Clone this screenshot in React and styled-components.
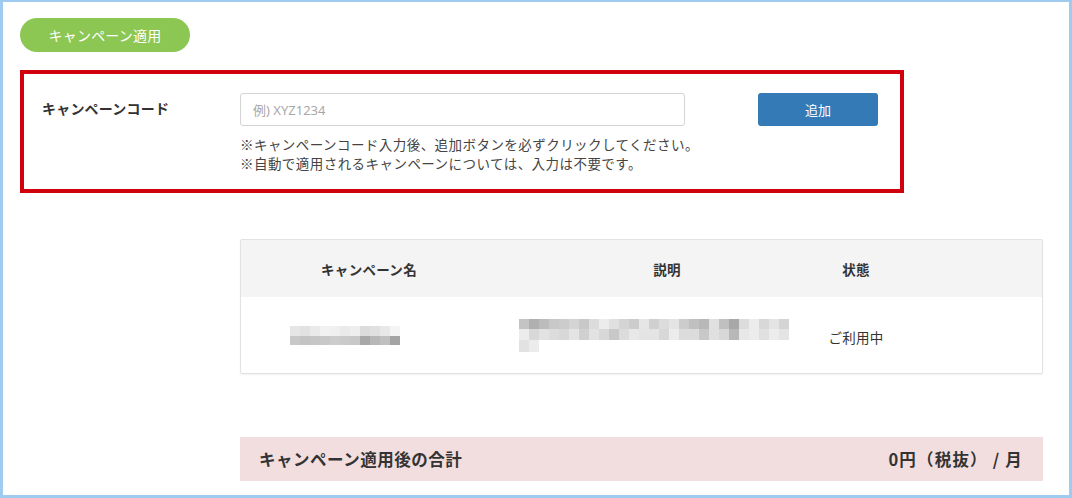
import React from "react";
import styled, { createGlobalStyle } from "styled-components";

const Global = createGlobalStyle`
  html, body { margin: 0; padding: 0; background: #fff; }
  body { font-family: "Noto Sans CJK JP", "Noto Sans", sans-serif; color: #333; }
  * { box-sizing: border-box; }
`;

const Frame = styled.div`
  width: 1072px;
  height: 498px;
  border: 3px solid #9fcbf0;
  border-top-width: 2px;
  background: #fff;
  padding: 16px 23px 0 17px;
  display: flex;
  flex-direction: column;
  overflow: hidden;
`;

const Pill = styled.div`
  width: 170px;
  height: 34px;
  border-radius: 17px;
  background: #8cc653;
  color: #fff;
  font-size: 14px;
  display: flex;
  align-items: center;
  justify-content: center;
  letter-spacing: 0.2px;
  margin-bottom: 18px;
`;

const CodeBox = styled.div`
  width: 884px;
  height: 123px;
  border: 4px solid #d0000c;
  padding: 19px 0 0 18px;
  display: grid;
  grid-template-columns: 198px 445px 1fr;
  column-gap: 0;
`;

const Label = styled.div`
  font-size: 14px;
  font-weight: 700;
  color: #333;
  padding-top: 5px;
  letter-spacing: 0.2px;
`;

const InputCol = styled.div`
  display: flex;
  flex-direction: column;
`;

const CodeInput = styled.input`
  width: 445px;
  height: 33px;
  border: 1px solid #d4d4d4;
  border-radius: 3px;
  padding: 0 12px;
  font-family: "Noto Sans", "Noto Sans CJK JP", sans-serif;
  font-size: 13px;
  color: #333;
  outline: none;
  &::placeholder { color: #a8a8a8; }
`;

const Notes = styled.div`
  margin-top: 9px;
  font-size: 13.5px;
  line-height: 19px;
  color: #444;
  letter-spacing: 0.45px;
  white-space: nowrap;
`;

const AddButton = styled.button`
  margin-left: 73px;
  width: 120px;
  height: 33px;
  border: none;
  border-radius: 3px;
  background: #337ab7;
  color: #fff;
  font-family: "Noto Sans CJK JP", sans-serif;
  font-size: 13px;
`;

const Table = styled.div`
  margin: 46px 0 0 220px;
  width: 803px;
  border: 1px solid #e2e2e2;
  border-radius: 2px;
  box-shadow: 0 1px 2px rgba(0,0,0,0.06);
  overflow: hidden;
`;

const Row = styled.div`
  display: grid;
  grid-template-columns: 256px 338px 42px 1fr;
  height: ${(p) => (p.$head ? "57px" : "76px")};
  background: ${(p) => (p.$head ? "#f4f4f4" : "#fff")};
  align-items: center;
  font-size: 13.5px;
  font-weight: ${(p) => (p.$head ? 700 : 400)};
  color: #333;
`;

const Cell = styled.div`
  display: flex;
  justify-content: ${(p) => p.$align || "center"};
  padding-left: ${(p) => p.$pad || 0}px;
  padding-top: ${(p) => p.$top || 0}px;
  white-space: nowrap;
  letter-spacing: 0.3px;
`;

const Pixels = styled.div`
  display: flex;
  flex-direction: column;
`;

const PixelRow = styled.div`
  display: flex;
`;

const Px = styled.div`
  width: ${(p) => p.$w}px;
  height: ${(p) => p.$h}px;
`;

const Total = styled.div`
  margin: 63px 0 0 220px;
  width: 803px;
  height: 44px;
  background: #f2dede;
  display: flex;
  align-items: center;
  justify-content: space-between;
  padding: 0 20px 0 19px;
  font-size: 16.5px;
  font-weight: 700;
  color: #333;
  letter-spacing: 0.5px;
`;

const TotalValue = styled.span`
  letter-spacing: 1.2px;
`;

const nameBlur = [
  { h: 10, c: ["e6", "e2", "ea", "f2", "f0", "ea", "ee", "dc", "e0", "e8", "f4"] },
  { h: 9, c: ["c8", "c4", "c6", "c8", "cc", "ca", "c8", "a8", "b8", "c0", "a4"] },
];

const descBlur = [
  { h: 10, c: ["c4", "b0", "bc", "c8", "cc", "d4", "c8", "dc", "ec", "e0", "d4", "cc", "e6", "d0", "dc", "e4", "cc", "c0", "b8", "e0", "c0", "a8", "dc", "ec", "d8", "e4", "d4"] },
  { h: 11, c: ["ec", "d8", "e2", "dc", "d8", "e4", "d0", "e2", "d8", "c8", "dc", "e8", "e4", "e4", "d8", "ec", "dc", "dc", "c8", "e0", "d8", "b8", "e8", "ec", "e0", "ec", "e4"] },
  { h: 12, c: ["e2", "ec"] },
];

function Blur({ rows, w }) {
  return (
    <Pixels>
      {rows.map((r, i) => (
        <PixelRow key={i}>
          {r.c.map((g, j) => (
            <Px key={j} $w={w} $h={r.h} style={{ background: `#${g}${g}${g}` }} />
          ))}
        </PixelRow>
      ))}
    </Pixels>
  );
}

export default function App() {
  return (
    <>
      <Global />
      <Frame>
        <Pill>キャンペーン適用</Pill>
        <CodeBox>
          <Label>キャンペーンコード</Label>
          <InputCol>
            <CodeInput placeholder="例) XYZ1234" />
            <Notes>
              ※キャンペーンコード入力後、追加ボタンを必ずクリックしてください。
              <br />
              ※自動で適用されるキャンペーンについては、入力は不要です。
            </Notes>
          </InputCol>
          <div>
            <AddButton>追加</AddButton>
          </div>
        </CodeBox>
        <Table>
          <Row $head>
            <Cell>キャンペーン名</Cell>
            <Cell $pad={2}>説明</Cell>
            <Cell>状態</Cell>
            <Cell />
          </Row>
          <Row>
            <Cell $align="flex-start" $pad={49}>
              <Blur rows={nameBlur} w={10} />
            </Cell>
            <Cell $align="flex-start" $pad={22}>
              <Blur rows={descBlur} w={10} />
            </Cell>
            <Cell $top={4}>ご利用中</Cell>
            <Cell />
          </Row>
        </Table>
        <Total>
          <span>キャンペーン適用後の合計</span>
          <TotalValue>0円（税抜） / 月</TotalValue>
        </Total>
      </Frame>
    </>
  );
}
